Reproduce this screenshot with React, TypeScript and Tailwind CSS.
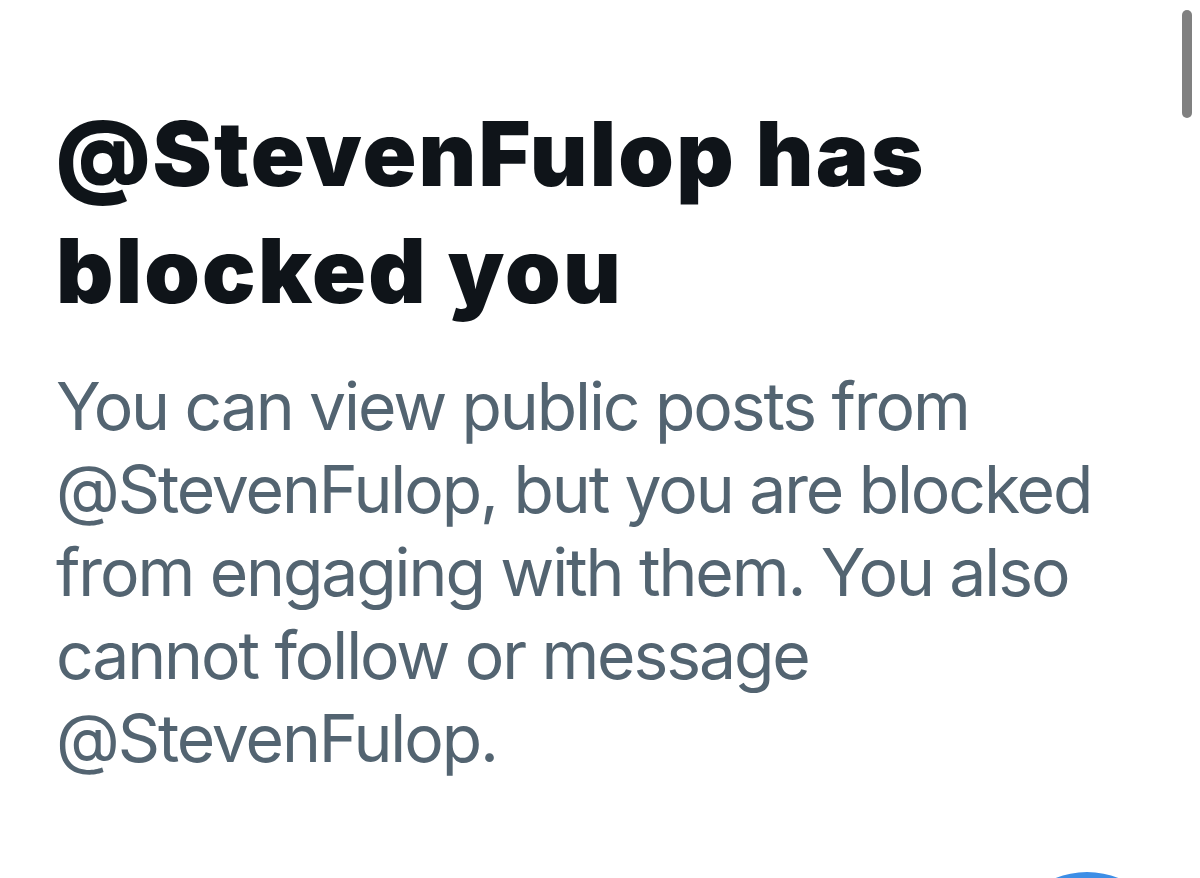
export default function App() {
  return (
    <div className="relative h-[878px] w-[1200px] overflow-hidden bg-white">
      <div className="pl-[56px] pt-[95px]">
        <h1
          className="text-[89px] font-black leading-[117px] tracking-[2.2px] text-[#0f1419]"
          style={{ fontFamily: 'Inter, "Liberation Sans", sans-serif' }}
        >
          @StevenFulop has
          <br />
          blocked you
        </h1>
        <p
          className="mt-[36px] text-[66px] font-normal leading-[83px] tracking-[-2.1px] text-[#536471]"
          style={{ fontFamily: 'Inter, "Liberation Sans", sans-serif' }}
        >
          You can view public posts from
          <br />
          @StevenFulop, but you are blocked
          <br />
          from engaging with them. You also
          <br />
          cannot follow or message
          <br />
          @StevenFulop.
        </p>
      </div>
      <div className="absolute right-[8px] top-[10px] h-[108px] w-[10px] rounded-full bg-[#808080]" />
      <div className="absolute left-[1002px] top-[872px] h-[170px] w-[170px] rounded-full bg-[#3d8ee6]" />
    </div>
  );
}
